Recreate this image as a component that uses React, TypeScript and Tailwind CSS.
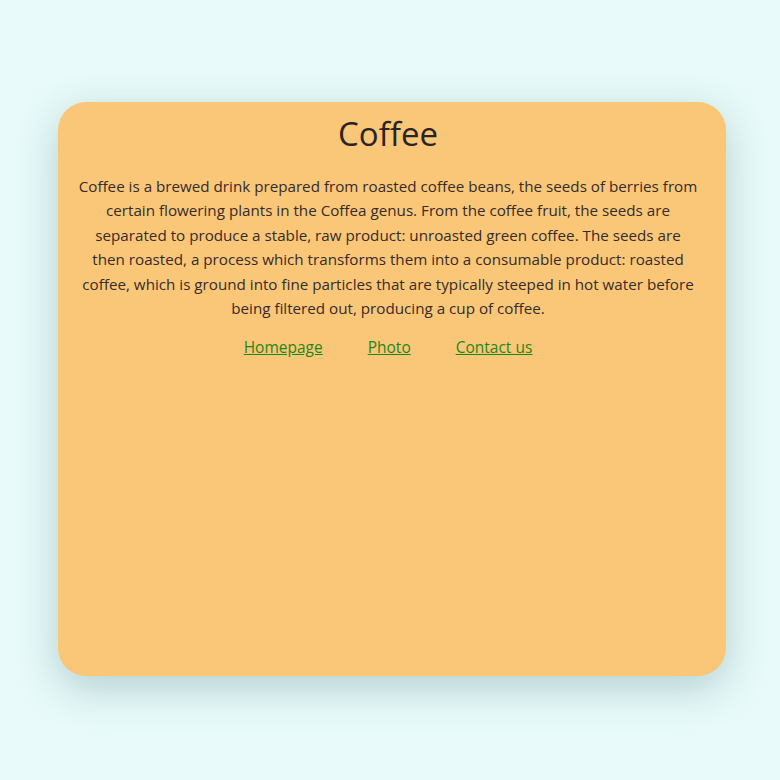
export default function App() {
  return (
    <div className="min-h-[780px] w-[780px] bg-[#e8fafa] pt-[102px] pl-[58px]" style={{ fontFamily: '"Open Sans", sans-serif' }}>
      <div className="w-[668px] h-[574px] rounded-[28px] bg-[#fac778] pl-[20px] pr-[28px] shadow-[0_12px_40px_rgba(60,110,110,0.3)]">
        <h1 className="text-center text-[33px] leading-[40px] pt-[12px] text-[#2b2424]">Coffee</h1>
        <p className="mt-[20px] text-center text-[15.2px] leading-[24.4px] text-[#352b2b]">
          Coffee is a brewed drink prepared from roasted coffee beans, the seeds of berries from certain flowering plants in the Coffea genus. From the coffee fruit, the seeds are separated to produce a stable, raw product: unroasted green coffee. The seeds are then roasted, a process which transforms them into a consumable product: roasted coffee, which is ground into fine particles that are typically steeped in hot water before being filtered out, producing a cup of coffee.
        </p>
        <div className="mt-[16px] flex justify-center gap-[45px] text-[15.5px] text-[#1f861a]">
          <a href="#" className="underline">Homepage</a>
          <a href="#" className="underline">Photo</a>
          <a href="#" className="underline">Contact us</a>
        </div>
      </div>
    </div>
  );
}
